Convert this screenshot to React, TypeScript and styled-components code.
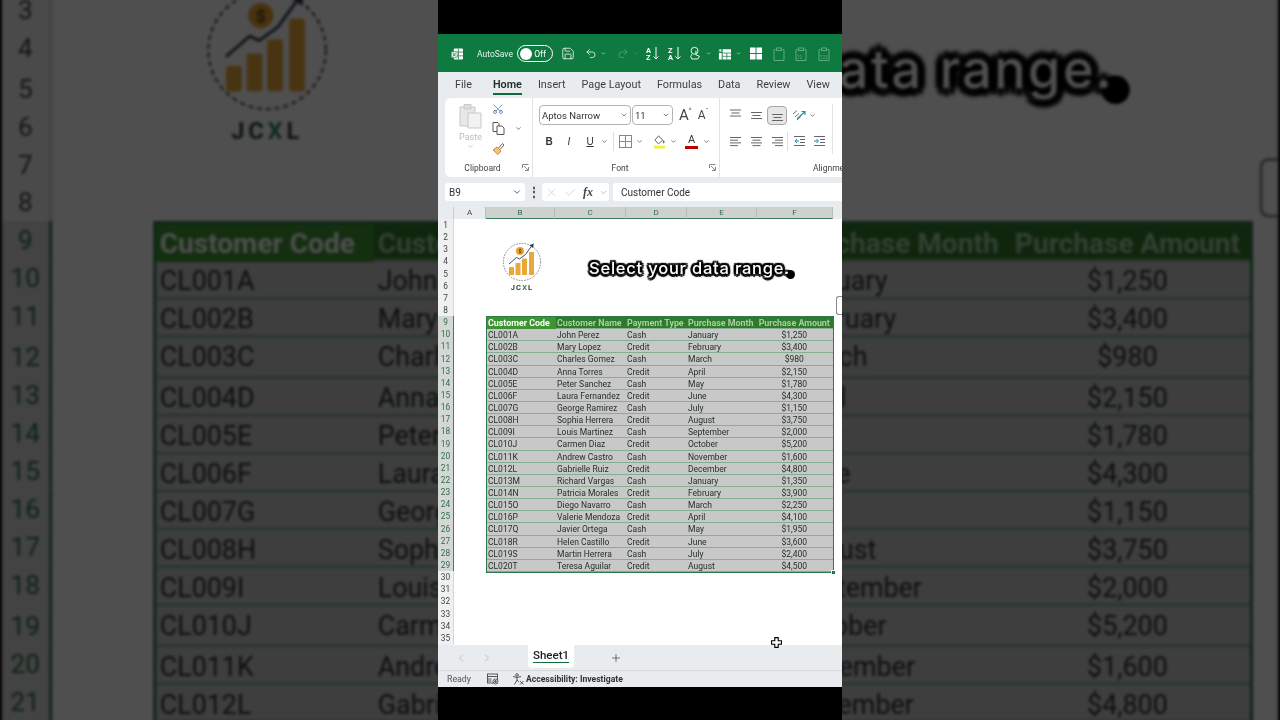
import React from 'react';
import styled, { createGlobalStyle } from 'styled-components';
import {
  ChevronDown, ChevronLeft, ChevronRight, Check, Plus, Redo2, Save, Scissors, Undo2, X,
} from 'lucide-react';

const rows = [
  ['CL001A', 'John Perez', 'Cash', 'January', '$1,250'],
  ['CL002B', 'Mary Lopez', 'Credit', 'February', '$3,400'],
  ['CL003C', 'Charles Gomez', 'Cash', 'March', '$980'],
  ['CL004D', 'Anna Torres', 'Credit', 'April', '$2,150'],
  ['CL005E', 'Peter Sanchez', 'Cash', 'May', '$1,780'],
  ['CL006F', 'Laura Fernandez', 'Credit', 'June', '$4,300'],
  ['CL007G', 'George Ramirez', 'Cash', 'July', '$1,150'],
  ['CL008H', 'Sophia Herrera', 'Credit', 'August', '$3,750'],
  ['CL009I', 'Louis Martinez', 'Cash', 'September', '$2,000'],
  ['CL010J', 'Carmen Diaz', 'Credit', 'October', '$5,200'],
  ['CL011K', 'Andrew Castro', 'Cash', 'November', '$1,600'],
  ['CL012L', 'Gabrielle Ruiz', 'Credit', 'December', '$4,800'],
  ['CL013M', 'Richard Vargas', 'Cash', 'January', '$1,350'],
  ['CL014N', 'Patricia Morales', 'Credit', 'February', '$3,900'],
  ['CL015O', 'Diego Navarro', 'Cash', 'March', '$2,250'],
  ['CL016P', 'Valerie Mendoza', 'Credit', 'April', '$4,100'],
  ['CL017Q', 'Javier Ortega', 'Cash', 'May', '$1,950'],
  ['CL018R', 'Helen Castillo', 'Credit', 'June', '$3,600'],
  ['CL019S', 'Martin Herrera', 'Cash', 'July', '$2,400'],
  ['CL020T', 'Teresa Aguilar', 'Credit', 'August', '$4,500'],
];

const headers = ['Customer Code', 'Customer Name', 'Payment Type', 'Purchase Month', 'Purchase Amount'];
const columns = [
  { name: 'A', width: 32 },
  { name: 'B', width: 69, selected: true },
  { name: 'C', width: 71, selected: true },
  { name: 'D', width: 61, selected: true },
  { name: 'E', width: 70, selected: true },
  { name: 'F', width: 76, selected: true },
];
const tabs = ['File', 'Home', 'Insert', 'Page Layout', 'Formulas', 'Data', 'Review', 'View'];

// small ribbon drawings
const Lines = ({ widths, align }: { widths: number[]; align: 'left' | 'center' | 'right' }) => (
  <svg width="13" height="13" viewBox="0 0 13 13" stroke="#666" strokeWidth="1">
    {widths.map((w, i) => {
      const x = align === 'left' ? 1 : align === 'right' ? 12 - w : 6.5 - w / 2;
      return <line key={i} x1={x} x2={x + w} y1={2.5 + i * 2.7} y2={2.5 + i * 2.7} />;
    })}
  </svg>
);

const VAlign = ({ top }: { top: number }) => (
  <svg width="13" height="13" viewBox="0 0 13 13" stroke="#666" strokeWidth="1">
    <line x1="1" x2="12" y1={top} y2={top} />
    <line x1="2.5" x2="10.5" y1={top + 3} y2={top + 3} />
    <line x1="1" x2="12" y1={top + 6} y2={top + 6} />
  </svg>
);

const Indent = ({ flip }: { flip?: boolean }) => (
  <svg width="13" height="13" viewBox="0 0 13 13" fill="none">
    <g stroke="#666">
      <line x1="1" x2="12" y1="1.5" y2="1.5" />
      <line x1="7" x2="12" y1="4.5" y2="4.5" />
      <line x1="7" x2="12" y1="7.5" y2="7.5" />
      <line x1="1" x2="12" y1="10.5" y2="10.5" />
    </g>
    <path d={flip ? 'M1 6h4M3.5 4l2 2-2 2' : 'M6 6H2M4 4 2 6l2 2'} stroke="#1b8fa8" />
  </svg>
);

const SortIcon = ({ first, second }: { first: string; second: string }) => (
  <svg width="13" height="15" viewBox="0 0 13 15" fill="#fff" fontFamily="Roboto, sans-serif" fontSize="7.5" fontWeight="700">
    <text x="0" y="6.5">{first}</text>
    <text x="0" y="14">{second}</text>
    <path d="M10 1v12M7.5 10.5 10 13l2.5-2.5" fill="none" stroke="#fff" />
  </svg>
);

const FaintPaste = ({ label }: { label?: string }) => (
  <svg width="12" height="14" viewBox="0 0 12 14" fill="none" stroke="#5fa882" fontFamily="Roboto, sans-serif">
    <path d="M2.5 2.5H1v11h10v-11H9.5" />
    <rect x="3.5" y="1" width="5" height="2.5" />
    {label && <text x="2" y="11.5" fontSize="4.5" stroke="none" fill="#5fa882">{label}</text>}
  </svg>
);

const Logo = () => (
  <svg width="40" height="40" viewBox="0 0 40 40">
    <circle cx="20" cy="20" r="18.6" fill="#fff" stroke="#555" strokeWidth="0.7" strokeDasharray="1.6 1.2" />
    <circle cx="18" cy="9" r="4" fill="#e9a02f" />
    <text x="18" y="11" fontSize="5.5" fontWeight="700" textAnchor="middle" fill="#5b3b08" fontFamily="Roboto, sans-serif">$</text>
    <rect x="7" y="25" width="5" height="8" rx="0.8" fill="#eba83a" />
    <rect x="13.5" y="21" width="5" height="12" rx="0.8" fill="#eba83a" />
    <rect x="20" y="16.5" width="5" height="16.5" rx="0.8" fill="#eba83a" />
    <rect x="27" y="10" width="5" height="23" rx="0.8" fill="#eba83a" />
    <path d="M7 22 14.5 15.5l3 1.4 6-4.4L30 3.5" fill="none" stroke="#2d3a46" strokeWidth="0.9" />
    <path d="M27.5 3.2 31.8 1.5 31 6Z" fill="#2d3a46" />
  </svg>
);

const CursorPlus = () => (
  <svg width="11" height="11" viewBox="0 0 11 11">
    <path d="M3.8.6h3.4v3.2h3.2v3.4H7.2v3.2H3.8V7.2H.6V3.8h3.2Z" fill="#fff" stroke="#000" strokeWidth="1.1" />
  </svg>
);

const LauncherIcon = () => (
  <LauncherSpot>
    <svg width="7" height="7" viewBox="0 0 7 7" fill="none" stroke="#666" strokeWidth="0.8">
      <path d="M.5 4V.5H6.5" />
      <path d="M2 2l4 4M6.5 3v3.500H3" />
    </svg>
  </LauncherSpot>
);

const VideoFrame = () => (
  <Frame>
    <TitleBar>
      <Slot $ml={13} $w={12}>
        <svg width="13" height="14" viewBox="0 0 13 14">
          <rect x="3" y="1" width="10" height="12" rx="1" fill="#fff" />
          <path d="M8 1v12M3 5h10M3 9h10" stroke="#107c41" strokeWidth="0.8" />
          <rect x="0.3" y="4.5" width="6.5" height="6.5" rx="0.7" fill="#e8f3ec" stroke="#107c41" strokeWidth="0.6" />
          <path d="m2 6 3 3.500m0-3.500-3 3.500" stroke="#107c41" strokeWidth="0.9" />
        </svg>
      </Slot>
      <AutoSave>AutoSave</AutoSave>
      <Toggle>
        <Knob />
        <span>Off</span>
      </Toggle>
      <Slot $ml={8} $w={14}><Save size={15} color="#fff" strokeWidth={1.3} /></Slot>
      <Slot $ml={10} $w={12}><Undo2 size={15} color="#fff" strokeWidth={1.5} /></Slot>
      <Slot $ml={4} $w={5}><ChevronDown size={7} color="#fff" strokeWidth={2.5} /></Slot>
      <Slot $ml={11} $w={12}><Redo2 size={15} color="#5aa880" strokeWidth={1.5} /></Slot>
      <Slot $ml={5} $w={5}><ChevronDown size={7} color="#5aa880" strokeWidth={2.5} /></Slot>
      <Slot $ml={7} $w={13}><SortIcon first="A" second="Z" /></Slot>
      <Slot $ml={9} $w={13}><SortIcon first="Z" second="A" /></Slot>
      <Slot $ml={9} $w={10}>
        <svg width="11" height="15" viewBox="0 0 11 15" fill="none" stroke="#fff">
          <circle cx="5" cy="4.5" r="3.8" />
          <path d="M2 8.500a3.600 3.600 0 0 0 0 5h6.500l2-3-4-1.500V4.500" />
        </svg>
      </Slot>
      <Slot $ml={6} $w={5}><ChevronDown size={7} color="#fff" strokeWidth={2.5} /></Slot>
      <Slot $ml={7} $w={13}>
        <svg width="14" height="12" viewBox="0 0 14 12">
          <path d="M5 1h9v11H5zM1 5h3v7H1z" fill="#fff" />
          <path d="M5 5h9M5 8.500h9M9.500 5v7" stroke="#107c41" strokeWidth="0.8" />
          <path d="M2.500.5v3.500M.8 1.300l3.400 1.900m0-1.900L.8 3.200" stroke="#fff" strokeWidth="0.7" />
        </svg>
      </Slot>
      <Slot $ml={5} $w={5}><ChevronDown size={7} color="#fff" strokeWidth={2.5} /></Slot>
      <Slot $ml={9} $w={12}>
        <svg width="13" height="13" viewBox="0 0 13 13" fill="#fff">
          <rect width="6" height="6" />
          <rect x="7" width="6" height="6" />
          <rect y="7" width="6" height="6" />
          <rect x="7" y="7" width="6" height="6" />
        </svg>
      </Slot>
      <Slot $ml={11} $w={12}><FaintPaste /></Slot>
      <Slot $ml={10} $w={12}><FaintPaste label="12" /></Slot>
      <Slot $ml={11} $w={12}><FaintPaste label="123" /></Slot>
    </TitleBar>

    <TabStrip>
      {tabs.map(tab => <Tab key={tab} $active={tab === 'Home'}>{tab}</Tab>)}
    </TabStrip>

    <RibbonShell>
      <Ribbon>
        <ClipboardGroup>
          <ClipboardBody>
            <PasteButton>
              <svg width="25" height="26" viewBox="0 0 25 26" fill="#e8e8e8" stroke="#c8c8c8">
                <path d="M2 4h15v19H2z" />
                <path d="M6 1.500h7V6H6z" fill="#ddd" />
                <path d="M10 10h13v15H10z" fill="#f2f2f2" />
              </svg>
              <PasteLabel>Paste</PasteLabel>
              <ChevronDown size={7} color="#aaa" strokeWidth={2} />
            </PasteButton>
            <ClipTools>
              <Scissors size={12} color="#3a6ea5" strokeWidth={1.4} style={{ transform: 'rotate(-90deg)' }} />
              <CopyRow>
                <svg width="13" height="13" viewBox="0 0 13 13" fill="#fff" stroke="#555">
                  <path d="M1 .5h5l1 1v8H1z" />
                  <path d="M5 4h5l2 2v6.500H5z" />
                </svg>
                <ChevronDown size={7} color="#555" strokeWidth={2.5} />
              </CopyRow>
              <svg width="13" height="13" viewBox="0 0 13 13" fill="none">
                <path d="M1 8 5 5l4 4-3 3.500Z" fill="#f1c27d" stroke="#d68a24" />
                <path d="m6.500 6 4-4.500 1.500 1.500-4 4.500" stroke="#666" />
              </svg>
            </ClipTools>
          </ClipboardBody>
          <GroupLabel>Clipboard<LauncherIcon /></GroupLabel>
        </ClipboardGroup>

        <FontGroup>
          <ToolRow>
            <SelectBox $w={92}>Aptos Narrow<ChevronDown size={8} color="#444" strokeWidth={2} /></SelectBox>
            <SelectBox $w={41}>11<ChevronDown size={8} color="#444" strokeWidth={2} /></SelectBox>
            <GrowLetter $ml={5} $size={15}>A<sup>^</sup></GrowLetter>
            <GrowLetter $ml={6} $size={12}>A<sup>ˇ</sup></GrowLetter>
          </ToolRow>
          <FormatRow>
            <Slot $ml={12} $w={8}><FormatLetter $bold>B</FormatLetter></Slot>
            <Slot $ml={12} $w={8}><FormatLetter $italic>I</FormatLetter></Slot>
            <Slot $ml={13} $w={8}><FormatLetter $underline>U</FormatLetter></Slot>
            <Slot $ml={7} $w={7}><ChevronDown size={7} color="#555" strokeWidth={2.5} /></Slot>
            <Divider $ml={5} />
            <Slot $ml={4} $w={14}>
              <svg width="13" height="13" viewBox="0 0 13 13" fill="none" stroke="#888">
                <rect x="0.5" y="0.5" width="12" height="12" />
                <path d="M6.500 0v13M0 6.500h13" />
              </svg>
            </Slot>
            <Slot $ml={4} $w={7}><ChevronDown size={7} color="#555" strokeWidth={2.5} /></Slot>
            <Slot $ml={10} $w={13}>
              <svg width="14" height="15" viewBox="0 0 14 15" fill="none">
                <path d="m6 1.500 4.500 4.500L6 10 2 6Z" stroke="#555" />
                <path d="M11.500 6.500v3" stroke="#1f7fa8" strokeWidth="1.5" />
                <rect x="1" y="12" width="12" height="3" fill="#f4ee3a" />
              </svg>
            </Slot>
            <Slot $ml={4} $w={7}><ChevronDown size={7} color="#555" strokeWidth={2.5} /></Slot>
            <Slot $ml={8} $w={13}><ColorA>A</ColorA></Slot>
            <Slot $ml={5} $w={7}><ChevronDown size={7} color="#555" strokeWidth={2.5} /></Slot>
          </FormatRow>
          <GroupLabel>Font<LauncherIcon /></GroupLabel>
        </FontGroup>

        <AlignGroup>
          <AlignRow>
            <VAlignSlot><VAlign top={1} /></VAlignSlot>
            <VAlignSlot><VAlign top={3.5} /></VAlignSlot>
            <VAlignSlot $active><VAlign top={5.5} /></VAlignSlot>
            <Slot $ml={4} $w={14}>
              <svg width="14" height="13" viewBox="0 0 14 13" fill="none">
                <path d="M1 5 5 1.500M3 8l4-3.500M5 11l4-3.500" stroke="#777" />
                <path d="M5 10 12.500 3M9.500 2.500h3.500V6" stroke="#1b8fa8" strokeWidth="1.1" />
              </svg>
            </Slot>
            <Slot $ml={2} $w={8}><ChevronDown size={7} color="#555" strokeWidth={2.5} /></Slot>
          </AlignRow>
          <AlignRow>
            <VAlignSlot><Lines widths={[11, 8, 11, 8]} align="left" /></VAlignSlot>
            <VAlignSlot><Lines widths={[11, 8, 11, 8]} align="center" /></VAlignSlot>
            <VAlignSlot><Lines widths={[11, 8, 11, 8]} align="right" /></VAlignSlot>
            <Divider $ml={-1} />
            <Slot $ml={5} $w={13}><Indent /></Slot>
            <Slot $ml={7} $w={13}><Indent flip /></Slot>
          </AlignRow>
          <AlignLabel>Alignment</AlignLabel>
        </AlignGroup>
      </Ribbon>
    </RibbonShell>

    <FormulaBar>
      <NameBox>B9<ChevronDown size={10} color="#444" strokeWidth={2} /></NameBox>
      <Dots>⋮</Dots>
      <FxBox>
        <X size={13} color="#c4c4c4" strokeWidth={1.2} />
        <Check size={13} color="#c4c4c4" strokeWidth={1.2} />
        <FxMark>fx</FxMark>
        <ChevronDown size={9} color="#999" strokeWidth={1.5} />
      </FxBox>
      <FormulaInput>Customer Code</FormulaInput>
    </FormulaBar>

    <ColumnStrip>
      <Corner />
      {columns.map(col => (
        <ColumnHead key={col.name} $w={col.width} $selected={col.selected}>{col.name}</ColumnHead>
      ))}
    </ColumnStrip>

    <GridBody>
      <RowHeads>
        {Array.from({ length: 35 }, (_, i) => i + 1).map(n => (
          <RowHead key={n} $selected={n >= 9 && n <= 29}>{n}</RowHead>
        ))}
      </RowHeads>
      <Sheet>
        <TopArea>
          <LogoBlock>
            <Logo />
            <LogoText>JC<em>X</em>L</LogoText>
          </LogoBlock>
          <Caption>Select your data range.</Caption>
        </TopArea>
        <DataTable>
          <TableRow $header>
            {headers.map((h, i) => <HeaderCell key={h} $active={i === 0}>{h}</HeaderCell>)}
          </TableRow>
          {rows.map(row => (
            <TableRow key={row[0]}>
              {row.map((cell, i) => <Cell key={i} $right={i === 4}>{cell}</Cell>)}
            </TableRow>
          ))}
          <FillHandle />
        </DataTable>
        <SideFlap />
      </Sheet>
    </GridBody>

    <SheetBar>
      <ChevronLeft size={12} color="#a9b0b3" strokeWidth={1.5} />
      <ChevronRight size={12} color="#a9b0b3" strokeWidth={1.5} />
      <SheetTab>Sheet1</SheetTab>
      <Plus size={12} color="#333" strokeWidth={1.3} />
    </SheetBar>

    <StatusBar>
      <ReadyText>Ready</ReadyText>
      <svg width="12" height="12" viewBox="0 0 12 12" fill="none" stroke="#555">
        <rect x="0.5" y="1" width="10" height="9" />
        <path d="M.5 3.500h10M.5 6h4M.5 8h4" />
        <circle cx="8.5" cy="8.5" r="2.5" fill="#fff" />
        <circle cx="8.5" cy="8.5" r="1" fill="#555" />
      </svg>
      <A11yIcon>
        <svg width="12" height="12" viewBox="0 0 12 12" fill="none" stroke="#555">
          <circle cx="5" cy="2" r="1.3" />
          <path d="M1 3.500 5 4.500l4-1M5 4.500v2.500l-2.500 4.500M5 7l2 2" />
          <path d="m8 8 3.500 3.500m0-3.500L8 11.500" />
        </svg>
      </A11yIcon>
      <A11yText>Accessibility: Investigate</A11yText>
    </StatusBar>

    <MouseCursor><CursorPlus /></MouseCursor>
  </Frame>
);

const App = () => (
  <>
    <GlobalStyle />
    <Stage>
      <Backdrop aria-hidden="true"><VideoFrame /></Backdrop>
      <Foreground><VideoFrame /></Foreground>
    </Stage>
  </>
);

const GlobalStyle = createGlobalStyle`
  * {
    box-sizing: border-box;
  }

  html, body {
    margin: 0;
    padding: 0;
    height: 100%;
    background: #000;
    font-family: Roboto, "Liberation Sans", sans-serif;
  }
`;

const Stage = styled.div`
  position: relative;
  width: 1280px;
  height: 720px;
  overflow: hidden;
  display: flex;
  justify-content: center;
  background: #000;
`;

const Backdrop = styled.div`
  position: absolute;
  left: 438px;
  top: 0;
  transform: scale(3.16);
  transform-origin: 202px 360px;
  filter: brightness(0.31) blur(0.5px);
`;

const Foreground = styled.div`
  position: relative;
  filter: blur(0.25px);
`;

const Frame = styled.div`
  position: relative;
  width: 404px;
  height: 720px;
  padding: 34px 0 33px;
  background: #000;
  display: flex;
  flex-direction: column;
  overflow: hidden;
`;

const TitleBar = styled.div`
  height: 38px;
  flex: none;
  display: flex;
  align-items: center;
  background: #0f7a40;
  padding-top: 1px;
`;

const Slot = styled.span<{ $ml: number; $w: number }>`
  flex: none;
  display: inline-flex;
  align-items: center;
  justify-content: center;
  width: ${({ $w }) => $w}px;
  margin-left: ${({ $ml }) => $ml}px;
`;

const AutoSave = styled.span`
  margin-left: 14px;
  width: 34px;
  flex: none;
  font-size: 8.5px;
  color: #e6f2eb;
  white-space: nowrap;
`;

const Toggle = styled.span`
  margin-left: 6px;
  width: 36px;
  height: 17px;
  flex: none;
  display: flex;
  align-items: center;
  justify-content: space-between;
  padding: 0 6px 0 2px;
  border: 1px solid #fff;
  border-radius: 9px;
  font-size: 8.5px;
  color: #fff;
`;

const Knob = styled.span`
  width: 12px;
  height: 12px;
  border-radius: 50%;
  background: #fff;
`;

const TabStrip = styled.div`
  height: 26px;
  flex: none;
  display: flex;
  align-items: center;
  gap: 16px;
  padding: 0 0 0 17px;
  background: #e8ecee;
`;

const Tab = styled.span<{ $active?: boolean }>`
  flex: none;
  font-size: 10.8px;
  font-weight: ${({ $active }) => ($active ? 600 : 400)};
  color: ${({ $active }) => ($active ? '#1f2a27' : '#3c4043')};
  padding: 3px 0 2px;
  border-bottom: 2px solid ${({ $active }) => ($active ? '#0f6b3a' : 'transparent')};

  &:first-child {
    margin-right: 5px;
  }
`;

const RibbonShell = styled.div`
  flex: none;
  padding-left: 7px;
  background: #e8ecee;
`;

const Ribbon = styled.div`
  height: 79px;
  display: flex;
  background: #fff;
  border-radius: 6px 0 0 6px;
  overflow: hidden;
`;

const ClipboardGroup = styled.div`
  width: 88px;
  flex: none;
  display: flex;
  flex-direction: column;
  border-right: 1px solid #e3e3e3;
`;

const ClipboardBody = styled.div`
  flex: 1;
  display: flex;
  padding: 5px 0 0 13px;
  gap: 9px;
`;

const PasteButton = styled.div`
  width: 25px;
  display: flex;
  flex-direction: column;
  align-items: center;
`;

const PasteLabel = styled.span`
  font-size: 9px;
  color: #bcbcbc;
  margin: 3px 0 1px;
`;

const ClipTools = styled.div`
  display: flex;
  flex-direction: column;
  align-items: flex-start;
  gap: 7px;
`;

const CopyRow = styled.div`
  display: flex;
  align-items: center;
  gap: 10px;
`;

const GroupLabel = styled.div`
  position: relative;
  flex: none;
  height: 16px;
  margin-top: auto;
  font-size: 8.5px;
  line-height: 14px;
  text-align: center;
  color: #444;
  padding-right: 12px;
`;

const LauncherSpot = styled.span`
  position: absolute;
  right: 3px;
  top: 3px;
  line-height: 0;
`;

const FontGroup = styled.div`
  width: 187px;
  flex: none;
  display: flex;
  flex-direction: column;
  border-right: 1px solid #e3e3e3;
`;

const ToolRow = styled.div`
  display: flex;
  align-items: center;
  height: 20px;
  margin: 7px 0 0 6px;
`;

const SelectBox = styled.div<{ $w: number }>`
  width: ${({ $w }) => $w}px;
  height: 20px;
  flex: none;
  display: flex;
  align-items: center;
  justify-content: space-between;
  padding: 0 2px;
  margin-right: 1px;
  border: 1px solid #b4b4b4;
  border-radius: 4px;
  font-size: 9.5px;
  color: #333;
`;

const GrowLetter = styled.span<{ $ml: number; $size: number }>`
  margin-left: ${({ $ml }) => $ml}px;
  font-size: ${({ $size }) => $size}px;
  line-height: 1;
  color: #444;
  white-space: nowrap;

  sup {
    font-size: 7px;
    vertical-align: top;
    color: #555;
  }
`;

const FormatRow = styled.div`
  flex: none;
  display: flex;
  align-items: center;
  height: 24px;
  margin-top: 4px;
`;

const FormatLetter = styled.span<{ $bold?: boolean; $italic?: boolean; $underline?: boolean }>`
  font-family: "Liberation Sans", sans-serif;
  font-size: 10px;
  color: #333;
  font-weight: ${({ $bold }) => ($bold ? 700 : 400)};
  font-style: ${({ $italic }) => ($italic ? 'italic' : 'normal')};
  text-decoration: ${({ $underline }) => ($underline ? 'underline' : 'none')};
`;

const Divider = styled.i<{ $ml: number }>`
  width: 1px;
  height: 19px;
  margin-left: ${({ $ml }) => $ml}px;
  background: #ddd;
  flex: none;
`;

const ColorA = styled.span`
  display: block;
  width: 13px;
  height: 15px;
  border-bottom: 3px solid #c00000;
  font-size: 11px;
  line-height: 12px;
  text-align: center;
  color: #333;
`;

const AlignGroup = styled.div`
  position: relative;
  width: 113px;
  flex: none;
  display: flex;
  flex-direction: column;
  padding: 7px 0 0 5px;

  &::after {
    content: '';
    position: absolute;
    right: 0;
    top: 6px;
    width: 1px;
    height: 50px;
    background: #e3e3e3;
  }
`;

const AlignRow = styled.div`
  display: flex;
  align-items: center;
  height: 20px;
  margin-bottom: 6px;
`;

const VAlignSlot = styled.span<{ $active?: boolean }>`
  flex: none;
  width: 20px;
  height: 19px;
  margin-right: 1px;
  display: inline-flex;
  align-items: center;
  justify-content: center;
  border-radius: 4px;
  background: ${({ $active }) => ($active ? '#e6e6e6' : 'transparent')};
  border: 1px solid ${({ $active }) => ($active ? '#a8a8a8' : 'transparent')};
`;

const AlignLabel = styled.div`
  height: 16px;
  margin: auto 0 0 88px;
  font-size: 8.5px;
  line-height: 14px;
  color: #444;
  white-space: nowrap;
`;

const FormulaBar = styled.div`
  height: 30px;
  flex: none;
  display: flex;
  align-items: center;
  padding-left: 7px;
  background: #e8ecee;
`;

const NameBox = styled.div`
  width: 80px;
  height: 18px;
  flex: none;
  display: flex;
  align-items: center;
  justify-content: space-between;
  padding: 0 3px 0 4px;
  background: #fff;
  border-radius: 3px;
  font-size: 10px;
  color: #333;
`;

const Dots = styled.span`
  width: 17px;
  flex: none;
  text-align: center;
  font-size: 12px;
  font-weight: 700;
  color: #444;
`;

const FxBox = styled.div`
  width: 67px;
  height: 18px;
  flex: none;
  display: flex;
  align-items: center;
  justify-content: space-between;
  padding: 0 1px 0 3px;
  background: #fff;
  border-radius: 3px;
`;

const FxMark = styled.span`
  font-family: "Liberation Serif", serif;
  font-style: italic;
  font-weight: 700;
  font-size: 12px;
  color: #444;
`;

const FormulaInput = styled.div`
  flex: 1;
  height: 18px;
  margin-left: 4px;
  padding-left: 8px;
  background: #fff;
  border-radius: 3px 0 0 3px;
  font-size: 10px;
  line-height: 19px;
  color: #333;
`;

const ColumnStrip = styled.div`
  height: 12px;
  flex: none;
  display: flex;
  background: #e8ecee;
`;

const Corner = styled.div`
  width: 16px;
  flex: none;
  border-right: 1px solid #c9cccc;
`;

const ColumnHead = styled.div<{ $w: number; $selected?: boolean }>`
  width: ${({ $w }) => $w}px;
  flex: none;
  font-size: 8px;
  line-height: 11px;
  text-align: center;
  color: ${({ $selected }) => ($selected ? '#2f6b4b' : '#444')};
  background: ${({ $selected }) => ($selected ? '#cdd2cf' : 'transparent')};
  border-right: 1px solid #b9bdbb;
  border-bottom: 1px solid ${({ $selected }) => ($selected ? '#3b8058' : 'transparent')};
`;

const GridBody = styled.div`
  flex: 1;
  min-height: 0;
  display: flex;
  background: #fff;
  overflow: hidden;
`;

const RowHeads = styled.div`
  width: 16px;
  flex: none;
  background: #eef0f1;
`;

const RowHead = styled.div<{ $selected?: boolean }>`
  height: 12.15px;
  font-size: 8.3px;
  line-height: 12px;
  text-align: center;
  color: ${({ $selected }) => ($selected ? '#2f6b4b' : '#444')};
  background: ${({ $selected }) => ($selected ? '#d4d8d5' : 'transparent')};
  border-right: 1px solid ${({ $selected }) => ($selected ? '#3b8058' : '#d5d8d8')};
`;

const Sheet = styled.div`
  position: relative;
  flex: 1;
`;

const TopArea = styled.div`
  height: 97px;
  display: flex;
  align-items: flex-start;
  padding: 23px 0 0 48px;
`;

const LogoBlock = styled.div`
  width: 40px;
  flex: none;
  display: flex;
  flex-direction: column;
  align-items: center;
`;

const LogoText = styled.div`
  margin-top: 1px;
  font-size: 7.5px;
  font-weight: 700;
  letter-spacing: 1.2px;
  color: #2d3a46;

  em {
    font-style: normal;
    color: #2e8b57;
  }
`;

const Caption = styled.div`
  position: relative;
  isolation: isolate;
  margin: 17px 0 0 47px;
  font-family: Inter, sans-serif;
  font-size: 16.5px;
  font-weight: 500;
  letter-spacing: 0.78px;
  line-height: 18px;
  white-space: nowrap;
  color: #fff;
  text-shadow:
    2.5px 0 1px #000, -2.5px 0 1px #000, 0 2.5px 1px #000, 0 -2.5px 1px #000,
    1.8px 1.8px 1px #000, -1.8px 1.8px 1px #000, 1.8px -1.8px 1px #000, -1.8px -1.8px 1px #000;

  &::after {
    content: '';
    position: absolute;
    z-index: -1;
    right: -5px;
    bottom: -2px;
    width: 9px;
    height: 9px;
    border-radius: 50%;
    background: #000;
  }
`;

const DataTable = styled.div`
  position: relative;
  width: 347.5px;
  margin-left: 32px;
  border: 1.5px solid #2c7a4b;
  background: #c7c8c7;
`;

const TableRow = styled.div<{ $header?: boolean }>`
  display: grid;
  grid-template-columns: 69px 70px 61px 70px 74.5px;
  height: 12.15px;
  padding-top: 1px;
  align-items: center;
  background: ${({ $header }) => ($header ? '#2f7a2b' : '#c7c8c7')};
  border-bottom: 1px solid #84ad92;

  &:first-child {
    padding-top: 0;
  }
`;

const HeaderCell = styled.div<{ $active?: boolean }>`
  height: 100%;
  padding: 1px 0 0 1px;
  font-size: 8.9px;
  font-weight: 700;
  line-height: 11px;
  white-space: nowrap;
  color: ${({ $active }) => ($active ? '#fff' : '#a8d0a4')};
  background: ${({ $active }) => ($active ? '#3f9432' : 'transparent')};

  &:last-child {
    text-align: center;
    padding: 1px 0 0;
  }
`;

const Cell = styled.div<{ $right?: boolean }>`
  padding-left: ${({ $right }) => ($right ? 0 : 1)}px;
  font-size: 8.5px;
  line-height: 11px;
  white-space: nowrap;
  color: #26302b;
  text-align: ${({ $right }) => ($right ? 'center' : 'left')};
`;

const FillHandle = styled.i`
  position: absolute;
  right: -3px;
  bottom: -3px;
  width: 5px;
  height: 5px;
  background: #1f7a4a;
  border: 1px solid #fff;
`;

const SideFlap = styled.i`
  position: absolute;
  right: -2px;
  top: 77px;
  width: 8px;
  height: 19px;
  background: #fff;
  border: 1px solid #8a8a8a;
  border-right: 0;
  border-radius: 3px 0 0 3px;
`;

const MouseCursor = styled.span`
  position: absolute;
  left: 333px;
  top: 637px;
  line-height: 0;
`;

const SheetBar = styled.div`
  height: 26px;
  flex: none;
  display: flex;
  align-items: center;
  gap: 14px;
  padding-left: 17px;
  background: #e8ecee;
  border-bottom: 1px solid #d8dbdb;
`;

const SheetTab = styled.div`
  width: 46px;
  height: 23px;
  margin: 0 22px 0 21px;
  flex: none;
  align-self: flex-start;
  background: #fff;
  border-radius: 0 0 4px 4px;
  text-align: center;
  font-size: 11.5px;
  font-weight: 500;
  line-height: 20px;
  color: #222;
  text-decoration: underline;
  text-decoration-color: #0f6b3a;
  text-underline-offset: 3px;
`;

const StatusBar = styled.div`
  height: 16px;
  flex: none;
  display: flex;
  align-items: center;
  padding-left: 9px;
  background: #e8ecee;
`;

const ReadyText = styled.span`
  width: 40px;
  flex: none;
  font-size: 8.8px;
  color: #555;
`;

const A11yIcon = styled.span`
  display: inline-flex;
  margin: 0 2px 0 13px;
`;

const A11yText = styled.span`
  font-size: 8.6px;
  font-weight: 700;
  color: #333;
  white-space: nowrap;
`;

export default App;
